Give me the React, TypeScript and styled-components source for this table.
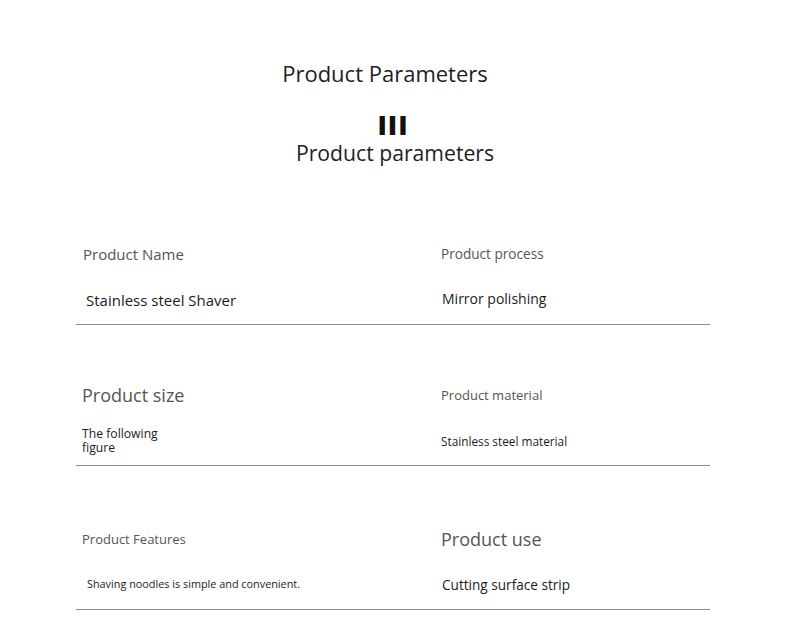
import React from "react";
import styled, { createGlobalStyle } from "styled-components";

const GlobalStyle = createGlobalStyle`
    html, body {
        margin: 0;
        padding: 0;
        background: #fff;
    }
    body {
        font-family: "Open Sans", "Noto Sans", sans-serif;
        color: #222;
    }
`;

const Page = styled.div`
    width: 790px;
    height: 639px;
    background: #fff;
    display: flex;
    flex-direction: column;
    align-items: center;
    padding-top: 58px;
    box-sizing: border-box;
`;

const Title = styled.h1`
    margin: 0 20px 0 0;
    font-size: 22px;
    font-weight: 400;
    line-height: 30px;
    color: #1e1e1e;
`;

const Mark = styled.div`
    margin: 24px 4px 0 0;
    font-size: 27px;
    font-weight: 800;
    line-height: 26px;
    letter-spacing: 1px;
    color: #111;
`;

const SubTitle = styled.h2`
    margin: 0;
    font-size: 21.2px;
    font-weight: 400;
    line-height: 30px;
    color: #1e1e1e;
`;

const Table = styled.div`
    width: 634px;
    margin: 14px 4px 0 0;
    display: flex;
    flex-direction: column;
`;

const Row = styled.div<{ $top: number }>`
    display: grid;
    grid-template-columns: 365px 1fr;
    padding-top: ${(p) => p.$top}px;
    padding-bottom: 9px;
    border-bottom: 1px solid #8f8f8f;
`;

const Cell = styled.div`
    display: flex;
    flex-direction: column;
`;

const Label = styled.div<{ $size: number; $indent: number; $shift?: number }>`
    height: 30px;
    display: flex;
    align-items: center;
    padding-left: ${(p) => p.$indent}px;
    margin-top: ${(p) => p.$shift ?? 0}px;
    font-size: ${(p) => p.$size}px;
    color: #555;
    white-space: nowrap;
`;

const Value = styled.div<{ $size: number; $indent: number; $shift?: number }>`
    height: 30px;
    margin-top: ${(p) => 15 + (p.$shift ?? 0)}px;
    display: flex;
    align-items: center;
    padding-left: ${(p) => p.$indent}px;
    font-size: ${(p) => p.$size}px;
    line-height: 14.5px;
    color: #1c1c1c;
`;

interface Item {
    label: string;
    labelSize: number;
    labelIndent: number;
    labelShift?: number;
    value: React.ReactNode;
    valueSize: number;
    valueIndent: number;
    valueShift?: number;
}

const rows: { top: number; items: [Item, Item] }[] = [
    {
        top: 56,
        items: [
            { label: "Product Name", labelSize: 15, labelIndent: 7, labelShift: 1, value: "Stainless steel Shaver", valueSize: 15, valueIndent: 10, valueShift: 1 },
            { label: "Product process", labelSize: 13.6, labelIndent: 0, value: "Mirror polishing", valueSize: 14, valueIndent: 1, valueShift: 1 },
        ],
    },
    {
        top: 55,
        items: [
            { label: "Product size", labelSize: 18, labelIndent: 6, value: <>The following<br />figure</>, valueSize: 12.2, valueIndent: 6, valueShift: 1 },
            { label: "Product material", labelSize: 13, labelIndent: -1, value: "Stainless steel material", valueSize: 11.8, valueIndent: 0, valueShift: 1 },
        ],
    },
    {
        top: 58,
        items: [
            { label: "Product Features", labelSize: 13, labelIndent: 6, value: "Shaving noodles is simple and convenient.", valueSize: 10.85, valueIndent: 11 },
            { label: "Product use", labelSize: 18, labelIndent: 0, value: "Cutting surface strip", valueSize: 13.6, valueIndent: 1, valueShift: 1 },
        ],
    },
];

export default function App() {
    return (
        <>
            <GlobalStyle />
            <Page>
                <Title>Product Parameters</Title>
                <Mark>III</Mark>
                <SubTitle>Product parameters</SubTitle>
                <Table>
                    {rows.map((row, i) => (
                        <Row key={i} $top={row.top}>
                            {row.items.map((it) => (
                                <Cell key={it.label}>
                                    <Label $size={it.labelSize} $indent={it.labelIndent} $shift={it.labelShift}>
                                        {it.label}
                                    </Label>
                                    <Value $size={it.valueSize} $indent={it.valueIndent} $shift={it.valueShift}>
                                        <span>{it.value}</span>
                                    </Value>
                                </Cell>
                            ))}
                        </Row>
                    ))}
                </Table>
            </Page>
        </>
    );
}
